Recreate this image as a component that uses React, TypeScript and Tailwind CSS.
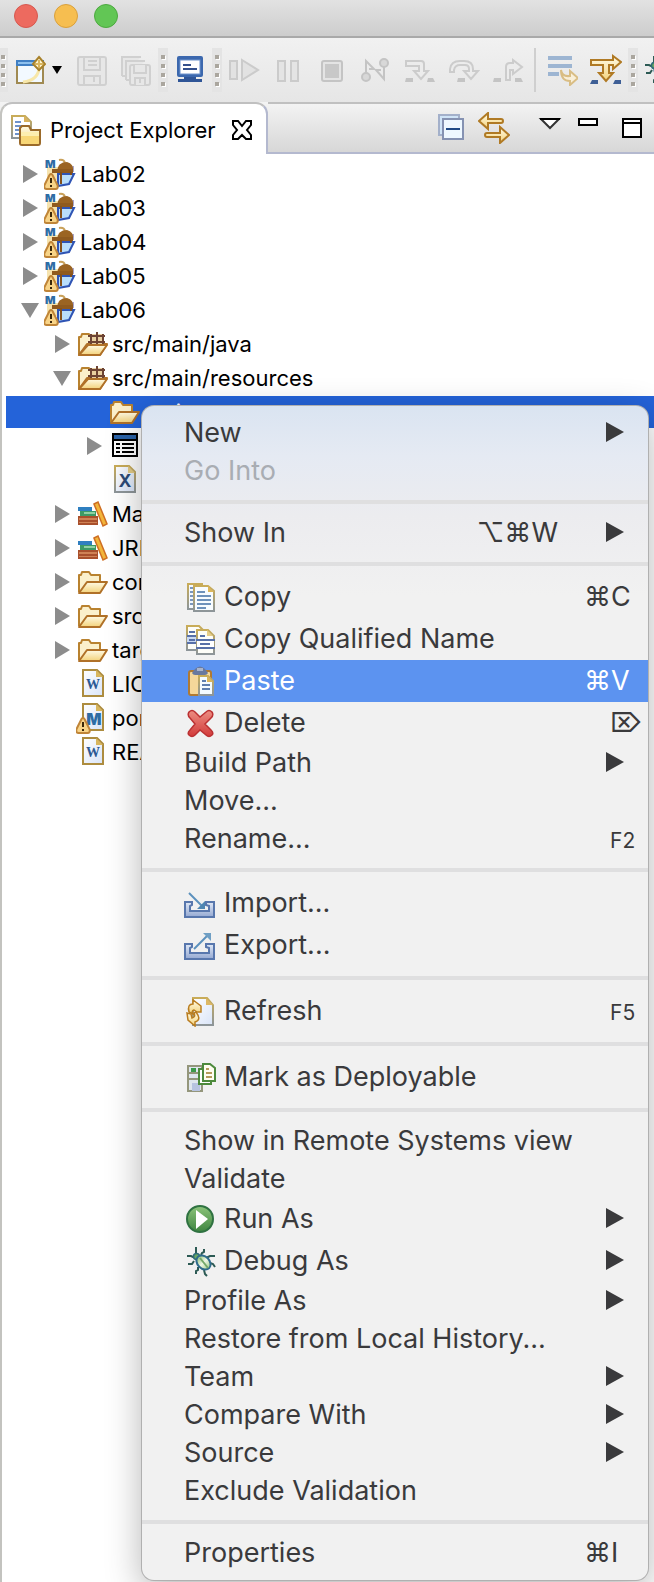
import type { ReactNode } from "react";

function Icon({ children, className = "size-8" }: { children: ReactNode; className?: string }) {
  return (
    <svg viewBox="0 0 32 32" fill="none" aria-hidden="true" className={`block shrink-0 ${className}`}>
      {children}
    </svg>
  );
}

/* ---------- gradients shared by the icons ---------- */

function Gradients() {
  return (
    <svg width="0" height="0" aria-hidden="true" className="absolute">
      <defs>
        <linearGradient id="gold" x1="0" y1="0" x2="0" y2="1">
          <stop offset="0" stopColor="#fffbe6" />
          <stop offset="1" stopColor="#f3d27a" />
        </linearGradient>
        <linearGradient id="paper" x1="0" y1="0" x2="1" y2="1">
          <stop offset="0" stopColor="#ffffff" />
          <stop offset="1" stopColor="#d9e4f8" />
        </linearGradient>
        <linearGradient id="tray" x1="0" y1="0" x2="0" y2="1">
          <stop offset="0" stopColor="#dfe8f6" />
          <stop offset="1" stopColor="#95a9d2" />
        </linearGradient>
        <linearGradient id="green" x1="0" y1="0" x2="0" y2="1">
          <stop offset="0" stopColor="#8cc47a" />
          <stop offset="1" stopColor="#3f8540" />
        </linearGradient>
        <linearGradient id="red" x1="0" y1="0" x2="0" y2="1">
          <stop offset="0" stopColor="#ec8d82" />
          <stop offset="1" stopColor="#d23a3a" />
        </linearGradient>
        <linearGradient id="leaf" x1="0" y1="0" x2="1" y2="0">
          <stop offset="0" stopColor="#8fc27a" />
          <stop offset="0.5" stopColor="#eef7e4" />
          <stop offset="1" stopColor="#a5cf92" />
        </linearGradient>
        <linearGradient id="border" x1="0" y1="0" x2="0" y2="1">
          <stop offset="0" stopColor="#c9ac58" />
          <stop offset="1" stopColor="#8d9599" />
        </linearGradient>
      </defs>
    </svg>
  );
}

/* ---------- toolbar icons ---------- */

const NewIcon = () => (
  <Icon>
    <path d="M3 8h26v21H3z" fill="#f2f9ff" stroke="#a08a52" strokeWidth="2" />
    <path d="M2 6h28v6H2z" fill="#3f7fc4" />
    <path d="M4 8h22v2H4z" fill="#8cc0ee" />
    <path d="M9 28Q25 26 25 13" stroke="#f7e7a9" strokeWidth="3" />
    <path d="M25 3l6 7-6 6-6-6z" fill="#fff6d2" stroke="#a8812a" strokeWidth="2" />
    <path d="M25 6v8M21 10h8" stroke="#d9b660" strokeWidth="2" />
  </Icon>
);
const SaveIcon = () => (
  <Icon>
    <g stroke="#d0d0d0" strokeWidth="2">
      <rect x="2" y="3" width="28" height="28" rx="2" fill="#e7e7e7" />
      <path d="M8 3v13h16V3M12 7h9M12 11h9" />
      <path d="M8 31v-9h16v9M18 23v5" />
    </g>
  </Icon>
);
const SaveAllIcon = () => (
  <Icon>
    <g stroke="#d0d0d0" strokeWidth="2" fill="#e7e7e7">
      <path d="M2 22V3h19M2 22h4M6 26V7h19M6 26h4" />
      <rect x="10" y="11" width="20" height="20" rx="2" />
      <path d="M14 11v8h12v-8M15 31v-7h10v7M20 25v4" />
    </g>
  </Icon>
);
const MonitorIcon = () => (
  <Icon>
    <rect x="3" y="2" width="26" height="21" rx="2" fill="#3c68ae" />
    <rect x="6" y="6" width="20" height="14" fill="#fff" stroke="#6f93cc" />
    <path d="M9 11h8M9 15h14" stroke="#34508c" strokeWidth="2" />
    <path d="M10 23h12v2h6v3H4v-3h6z" fill="#2f5597" />
  </Icon>
);
const ResumeIcon = () => (
  <Icon>
    <g stroke="#cbcbcb" strokeWidth="2" fill="#e2e2e2">
      <path d="M2 7h7v18H2zM14 6l16 10-16 10z" />
    </g>
  </Icon>
);
const PauseIcon = () => (
  <Icon>
    <path d="M6 7h7v20H6zM19 7h7v20h-7z" stroke="#cbcbcb" strokeWidth="2" fill="#e4e4e4" />
  </Icon>
);
const StopIcon = () => (
  <Icon>
    <rect x="6" y="7" width="20" height="20" rx="2" fill="#e4e4e4" stroke="#c4c4c4" strokeWidth="2" />
    <path d="M9 10h14v14H9z" fill="#c8c8c8" />
  </Icon>
);
const DisconnectIcon = () => (
  <Icon>
    <g stroke="#c4c4c4" strokeWidth="2" fill="#d8d8d8">
      <path d="M6 20V7l8 8h-5M24 11v14l-8-9h5" fill="none" />
      <circle cx="6" cy="23" r="4" />
      <circle cx="24" cy="9" r="4" />
    </g>
  </Icon>
);
const StepIntoIcon = () => (
  <Icon>
    <path d="M2 7h15q3 0 3 3v7h4l-7 8-7-8h5v-5H2z" fill="#ececec" stroke="#cccccc" strokeWidth="2" />
    <path d="M2 24h7v4H1zM24 24h5l2 4h-8z" fill="#c4c4c4" />
  </Icon>
);
const StepOverIcon = () => (
  <Icon>
    <path d="M2 18v-3q1-8 10-8h4q9 0 9 8v2h5l-7 8-7-8h5v-2q0-4-4-4h-5q-5 0-6 5v2z" fill="#ececec" stroke="#cccccc" strokeWidth="2" />
    <path d="M10 24h7v4H9z" fill="#c4c4c4" />
  </Icon>
);
const StepReturnIcon = () => (
  <Icon>
    <path d="M14 26V13q0-4 4-4h3V6l9 7-9 7v-4h-3v10z" fill="#ececec" stroke="#cccccc" strokeWidth="2" />
    <path d="M2 24h7v4H1zM23 24h6l2 4h-8z" fill="#c4c4c4" />
  </Icon>
);
const DropToFrameIcon = () => (
  <Icon>
    <path d="M2 2h24v4H2zM2 10h24v4H2zM2 18h11v4H2z" fill="#9db5d2" />
    <path d="M15 16q1 7 9 6v-5l8 7-8 7v-4q-9 0-9-11z" fill="#f9efd8" stroke="#d9bd84" strokeWidth="2" />
  </Icon>
);
const StepFiltersIcon = () => (
  <Icon>
    <path d="M1 6h22V2l8 6-8 7v-4h-4v8h4l-7 8-7-8h4v-8H1z" fill="url(#gold)" stroke="#b07a24" strokeWidth="2" />
    <path d="M2 26h6v4H0zM25 26h6v4h-8z" fill="#3e5f96" />
  </Icon>
);
const BugIcon = () => (
  <Icon>
    <path
      d="M11 12H9L7 11H3M12 9V2M17 10l1-2 2-1V4M22 13l4-2h5M26 18l3 1 2 3M10 16l-2 3H4M14 22v3l-2 1v3M20 25l1 4 2 2"
      stroke="#2c5a54"
      strokeWidth="2"
    />
    <circle cx="12.500" cy="11.500" r="3" fill="#6aa862" stroke="#2f6b78" strokeWidth="1.500" />
    <ellipse cx="19.500" cy="17.500" rx="8" ry="6" transform="rotate(45 19.5 17.5)" fill="url(#leaf)" stroke="#2f6b8c" strokeWidth="2" />
    <path d="M16 13l8 10" stroke="#74a86a" strokeWidth="2" />
  </Icon>
);

/* ---------- view header icons ---------- */

const ExplorerIcon = () => (
  <Icon>
    <path d="M2 2h13l6 6v16H2z" fill="#fff" stroke="url(#border)" strokeWidth="2" />
    <path d="M14 2v6h6z" fill="#d9b25c" />
    <path d="M5 8h6M5 12h8M5 16h5M5 20h4" stroke="#6f93cc" strokeWidth="2" />
    <path d="M10 29V14l2-2h7l2 4h9v13q0 2-2 2H12q-2 0-2-2z" fill="url(#gold)" stroke="#9b6a2a" strokeWidth="2" />
    <path d="M11 18h18v11q0 1-1 1H12q-1 0-1-1z" fill="#f8d777" />
    <path d="M11 18h18v4H11z" fill="#fdeeb0" />
  </Icon>
);
const CloseIcon = () => (
  <svg viewBox="0 0 20 20" className="block size-5" fill="#fff" stroke="#000" strokeWidth="2" aria-hidden="true">
    <path d="M1 1h5l4 5 4-5h5v4l-4 5 4 5v4h-5l-4-4-4 4H1v-4l4-5-4-5z" />
  </svg>
);
const CollapseAllIcon = () => (
  <Icon>
    <path d="M3 3h20v20H3z" fill="#cfe4f7" stroke="#a3b0ca" strokeWidth="2" />
    <path d="M7 7h20v20H7z" fill="#eef8ff" stroke="#8592b2" strokeWidth="2" />
    <path d="M10 17h14" stroke="#1f4a86" strokeWidth="2" />
  </Icon>
);
const LinkIcon = () => (
  <Icon>
    <g fill="url(#gold)" stroke="#b07a24" strokeWidth="2">
      <path d="M1 9l9-8v6h13q2 0 2 2t-2 2H10v6z" />
      <path d="M31 23l-9-8v6H9q-2 0-2 2t2 2h13v6z" />
    </g>
  </Icon>
);
const ViewMenuIcon = () => (
  <Icon>
    <path d="M7 7h18l-9 9z" fill="#fff" stroke="#333" strokeWidth="2" />
    <path d="M6 7h20" stroke="#000" strokeWidth="2" />
  </Icon>
);
const MinimizeIcon = () => (
  <Icon>
    <path d="M7 7h18v6H7z" fill="#fff" stroke="#000" strokeWidth="2" />
  </Icon>
);
const MaximizeIcon = () => (
  <Icon>
    <path d="M7 7h18v18H7zM7 11h18" fill="#fff" stroke="#000" strokeWidth="2" />
  </Icon>
);

/* ---------- tree icons ---------- */

const Warning = () => (
  <>
    <path d="M5.500 17q1.500-2 3 0l5 10q1 4-2 4h-9q-3 0-2-4z" fill="#f8d488" stroke="#c08538" strokeWidth="2" />
    <path d="M7 20v5M7 27v2" stroke="#3b2708" strokeWidth="2" />
  </>
);
const ProjectIcon = () => (
  <Icon>
    <path d="M3 9h12v13H3z" fill="#f6e3ae" />
    <path d="M15 2q5-1 6 3M15 8l6-2" stroke="#c9a15a" strokeWidth="2" />
    <path d="M26 8h4v6h-4z" fill="#a9a6cc" />
    <path d="M13 13q1-9 10-9 7 2 6 9z" fill="#9b6422" />
    <path d="M8 11h21v4H8z" fill="#8f5a1e" />
    <path d="M14 16h16l-5 10-11 2z" fill="#b9defb" stroke="#2f54b4" strokeWidth="2" />
    <path d="M17 14v12M27 14v3" stroke="#85511b" strokeWidth="2" />
    <text x="1" y="10" fontSize="11" fontWeight="900" fill="#2e6ca4" className="font-['Inter',sans-serif]">M</text>
    <Warning />
  </Icon>
);
const OpenFolder = () => (
  <>
    <path d="M3 26V9h2l1-3h7l2 3h9v6" fill="#fbf0cb" stroke="#b9822f" strokeWidth="2" strokeLinejoin="round" />
    <path d="M3 27l8-11h20l-7 11z" fill="url(#gold)" stroke="#b07128" strokeWidth="2" strokeLinejoin="round" />
  </>
);
const FolderIcon = () => (
  <Icon>
    <OpenFolder />
  </Icon>
);
const SourceFolderIcon = () => (
  <Icon>
    <OpenFolder />
    <path d="M15 6h12v11H15z" fill="#e8cfa0" />
    <path d="M12 8h17M12 14h17M15 6v12M21 4v14M27 6v12" stroke="#6d4334" strokeWidth="2" />
    <path d="M3 27l9-10h19l-7 10z" fill="url(#gold)" stroke="#b07128" strokeWidth="2" strokeLinejoin="round" />
  </Icon>
);
const TableIcon = () => (
  <Icon>
    <path d="M5 4h24v22H5z" fill="#fff" stroke="#000" strokeWidth="2" />
    <path d="M6 5h22v4H6z" fill="#2a63a8" />
    <path d="M5 10h24" stroke="#000" strokeWidth="2" />
    <path d="M8 14h4M14 14h12M8 18h4M14 18h12M8 22h4M14 22h12" stroke="#000" strokeWidth="2" />
  </Icon>
);
function FileIcon({ letter, warning }: { letter: string; warning?: boolean }) {
  return (
    <Icon>
      <path d="M7 2h14l6 6v20H7z" fill="url(#paper)" stroke="#ad8c3f" strokeWidth="2" />
      <path d="M20 2v7h7z" fill="#d8b65e" />
      {warning ? (
        <text x="18" y="23" textAnchor="middle" fontSize="16" fontWeight="900" fill="#2e6ca4" className="font-['Inter',sans-serif]">
          {letter}
        </text>
      ) : (
        <text x="17" y="21" textAnchor="middle" fontSize="14" fontWeight="700" fill="#2c5993" className="font-['Liberation_Serif',serif]">
          {letter}
        </text>
      )}
      {warning && <Warning />}
    </Icon>
  );
}
const SchemaIcon = () => (
  <Icon>
    <path d="M7 2h14l6 6v20H7z" fill="url(#paper)" stroke="url(#border)" strokeWidth="2" />
    <path d="M20 2v7h7z" fill="#e3cb86" />
    <text x="17" y="23" textAnchor="middle" fontSize="20" fontWeight="700" fill="#2c4a77" className="font-['Liberation_Mono',monospace]">
      X
    </text>
  </Icon>
);
const LibraryIcon = () => (
  <Icon>
    <path d="M2 9h14v4H2z" fill="#2f7fc0" />
    <path d="M4 13h16v5H4z" fill="#3d9a66" />
    <path d="M8 15h11" stroke="#8fd0a2" strokeWidth="2" />
    <path d="M2 18h20v9H2z" fill="#a9502c" />
    <path d="M3 20h18v2H3zM3 24h18v1H3z" fill="#cf8255" />
    <path d="M18 6l4-2 9 22-4 2z" fill="#f2b53a" stroke="#cf6f23" strokeWidth="1.500" />
  </Icon>
);

/* ---------- context menu icons ---------- */

const CopyIcon = () => (
  <Icon>
    <path d="M4 3h14v25H4z" fill="#f4f9ff" stroke="url(#border)" strokeWidth="2" />
    <path d="M6 7h4M6 11h4M6 15h4M6 19h4M6 23h4" stroke="#7b97bd" strokeWidth="2" />
    <path d="M10 5h14l6 5v20H10z" fill="#f8fcff" stroke="url(#border)" strokeWidth="2" />
    <path d="M24 5v6h6z" fill="#dcb65c" />
    <path d="M13 11h8M13 15h14M13 19h14M13 23h14M13 27h9" stroke="#6f92bb" strokeWidth="2" />
  </Icon>
);
const CopyNameIcon = () => (
  <Icon>
    <path d="M3 3h12l5 5v19H3z" fill="#fdfdf8" stroke="url(#border)" strokeWidth="2" />
    <path d="M3 14h12v6H3z" fill="#c9d9f2" />
    <path d="M5 9h6M3 13h12M5 17h6M3 20h12" stroke="#5870a8" strokeWidth="2" />
    <path d="M13 7h11l6 6v18H13z" fill="#fdfdf8" stroke="url(#border)" strokeWidth="2" />
    <path d="M23 7v6h6z" fill="#e6cd87" />
    <path d="M13 17h17v7H13z" fill="#fff" />
    <path d="M16 13h5M12 17h19M16 21h10M12 25h19" stroke="#5870a8" strokeWidth="2" />
  </Icon>
);
const PasteIcon = () => (
  <Icon>
    <rect x="5" y="6" width="22" height="24" rx="2" fill="#f5d79a" stroke="#b07a32" strokeWidth="2" />
    <path d="M11 4q5-5 10 0l3 4q-1 2-3 2H11q-2 0-3-2z" fill="#69799f" />
    <path d="M13 3h6v3h-6z" fill="#a9b4cc" />
    <path d="M15 11h9l5 5v14H15z" fill="#f4fbff" stroke="url(#border)" strokeWidth="2" />
    <path d="M23 11v6h6z" fill="#dcb65c" />
    <path d="M18 16h4M18 20h8M18 24h8" stroke="#5f7fae" strokeWidth="2" />
  </Icon>
);
const DeleteIcon = () => (
  <Icon>
    <path
      d="M5 5q3-3 6 0l5 5 6-5q3-3 6 0 2 3-1 6l-6 6 6 6q3 3 1 5-3 3-6 0l-6-5-5 5q-3 3-6 0-2-2 1-5l5-6-5-6q-3-3-1-6z"
      fill="url(#red)"
      stroke="#bb3133"
      strokeWidth="1.500"
    />
  </Icon>
);
const Tray = () => (
  <>
    <path d="M1 15h7v3l-2 1v5h19v-5l-3-1v-3h8v15H1z" fill="url(#tray)" stroke="#5877ad" strokeWidth="2" />
  </>
);
const ImportIcon = () => (
  <Icon>
    <Tray />
    <path d="M5 6l13 13" stroke="#5b91bd" strokeWidth="2" />
    <path d="M21 14v8h-8z" fill="#4f86b2" />
  </Icon>
);
const ExportIcon = () => (
  <Icon>
    <Tray />
    <path d="M10 20L23 7" stroke="#5b91bd" strokeWidth="2" />
    <path d="M19 4h8v8z" fill="#6f9fc4" />
  </Icon>
);
const RefreshIcon = () => (
  <Icon>
    <path d="M9 3h14l6 7v20H9z" fill="url(#paper)" stroke="url(#border)" strokeWidth="2" />
    <path d="M22 3v7h7z" fill="#ddb866" />
    <g fill="url(#gold)" stroke="#b97d20" strokeWidth="1.500">
      <path d="M5 17q-2-8 4-8V5l8 6v6h-4l-3-2q-3 1-1 4z" />
      <path d="M12 17q6 8-1 10v4l-7-6-1-7 4 1 1 4q4-1 2-5z" />
    </g>
  </Icon>
);
const DeployIcon = () => (
  <Icon>
    <path d="M4 5h14v25H4z" fill="#dfe6ee" stroke="#94967c" strokeWidth="2" />
    <path d="M5 12h12M5 18h12" stroke="#94967c" strokeWidth="2" />
    <path d="M7 7h5v4H7z" fill="#3c9a4a" />
    <path d="M8 22h8v8H8z" fill="#b7c3e0" />
    <path d="M15 8h12v15H15z" fill="#fff" stroke="#4d8a3c" strokeWidth="2" />
    <path d="M19 3h7l5 4v13H19z" fill="#fffdf0" stroke="#4d8a3c" strokeWidth="2" />
    <path d="M22 8h3M22 12h6M22 16h6" stroke="#b59b5a" strokeWidth="2" />
  </Icon>
);
const RunIcon = () => (
  <Icon>
    <circle cx="16" cy="16" r="13" fill="url(#green)" stroke="#2f7241" strokeWidth="2" />
    <path d="M12 7l12 9-12 10z" fill="#fff" />
  </Icon>
);

/* ---------- toolbar ---------- */

function Grip({ className = "" }: { className?: string }) {
  return (
    <div className={`flex h-11 w-[10px] shrink-0 flex-col items-center justify-center gap-[5px] bg-[#e4e4e4] ${className}`}>
      <i className="size-1 bg-[#aaa69e] shadow-[1px_1px_0_#fff]" />
      <i className="size-1 bg-[#aaa69e] shadow-[1px_1px_0_#fff]" />
      <i className="size-1 bg-[#aaa69e] shadow-[1px_1px_0_#fff]" />
      <i className="size-1 bg-[#aaa69e] shadow-[1px_1px_0_#fff]" />
    </div>
  );
}

function ToolButton({ label, disabled, children }: { label: string; disabled?: boolean; children: ReactNode }) {
  return (
    <button type="button" aria-label={label} disabled={disabled} className="shrink-0">
      {children}
    </button>
  );
}

function Toolbar() {
  return (
    <div role="toolbar" aria-label="Main" className="flex h-16 items-center overflow-hidden bg-linear-to-b from-[#f1f1f1] to-[#e6e6e6]">
      <Grip className="-ml-0.5" />
      <div className="flex items-center px-1.5">
        <ToolButton label="New"><NewIcon /></ToolButton>
        <button type="button" aria-label="New options" className="mx-1.5 h-8">
          <svg viewBox="0 0 10 8" className="block h-2 w-[10px]" aria-hidden="true">
            <path d="M0 0h10L5 8z" fill="#000" />
          </svg>
        </button>
        <div className="ml-2 flex gap-3">
          <ToolButton label="Save" disabled><SaveIcon /></ToolButton>
          <ToolButton label="Save All" disabled><SaveAllIcon /></ToolButton>
        </div>
      </div>
      <Grip />
      <div className="flex px-1.5">
        <ToolButton label="Open console"><MonitorIcon /></ToolButton>
      </div>
      <Grip />
      <div className="flex gap-3 px-1.5">
        <ToolButton label="Resume" disabled><ResumeIcon /></ToolButton>
        <ToolButton label="Suspend" disabled><PauseIcon /></ToolButton>
        <ToolButton label="Terminate" disabled><StopIcon /></ToolButton>
        <ToolButton label="Disconnect" disabled><DisconnectIcon /></ToolButton>
        <ToolButton label="Step Into" disabled><StepIntoIcon /></ToolButton>
        <ToolButton label="Step Over" disabled><StepOverIcon /></ToolButton>
        <ToolButton label="Step Return" disabled><StepReturnIcon /></ToolButton>
      </div>
      <div className="mx-1 h-11 w-0.5 shrink-0 bg-[#cfcfcf]" />
      <div className="flex gap-3 px-1.5">
        <ToolButton label="Drop to Frame"><DropToFrameIcon /></ToolButton>
        <ToolButton label="Use Step Filters"><StepFiltersIcon /></ToolButton>
      </div>
      <Grip />
      <div className="flex pl-1">
        <ToolButton label="Debug"><BugIcon /></ToolButton>
      </div>
    </div>
  );
}

/* ---------- project explorer ---------- */

function ViewHeader() {
  return (
    <div className="flex h-[52px] bg-linear-to-b from-[#f4f4f4] to-[#d6d6d6]">
      <div className="flex items-center rounded-t-xl border-2 border-b-0 border-t-[#c0c0c0] border-r-[#b4b9cf] border-l-[#c4c4c0] bg-white pt-0.5 pr-3.5 pl-2">
        <ExplorerIcon />
        <h1 className="pl-2 text-[22px] leading-7">Project Explorer</h1>
        <button type="button" aria-label="Close Project Explorer" className="ml-4">
          <CloseIcon />
        </button>
      </div>
      <div className="flex flex-1 items-center justify-end border-t-2 border-b-2 border-t-[#c0c0c0] border-b-[#b4b9cf] pr-1.5">
        <div className="flex gap-2.5">
          <ToolButton label="Collapse All"><CollapseAllIcon /></ToolButton>
          <ToolButton label="Link with Editor"><LinkIcon /></ToolButton>
        </div>
        <div className="ml-6 flex gap-1.5">
          <ToolButton label="View Menu"><ViewMenuIcon /></ToolButton>
          <ToolButton label="Minimize"><MinimizeIcon /></ToolButton>
        </div>
        <div className="ml-3 flex">
          <ToolButton label="Maximize"><MaximizeIcon /></ToolButton>
        </div>
      </div>
    </div>
  );
}

type Node = { level: 0 | 1 | 2; state?: "open" | "closed"; icon: ReactNode; label?: string; selected?: boolean };

const nodes: Node[] = [
  { level: 0, state: "closed", icon: <ProjectIcon />, label: "Lab02" },
  { level: 0, state: "closed", icon: <ProjectIcon />, label: "Lab03" },
  { level: 0, state: "closed", icon: <ProjectIcon />, label: "Lab04" },
  { level: 0, state: "closed", icon: <ProjectIcon />, label: "Lab05" },
  { level: 0, state: "open", icon: <ProjectIcon />, label: "Lab06" },
  { level: 1, state: "closed", icon: <SourceFolderIcon />, label: "src/main/java" },
  { level: 1, state: "open", icon: <SourceFolderIcon />, label: "src/main/resources" },
  { level: 2, icon: <FolderIcon />, label: "main", selected: true },
  { level: 2, state: "closed", icon: <TableIcon /> },
  { level: 2, icon: <SchemaIcon /> },
  { level: 1, state: "closed", icon: <LibraryIcon />, label: "Maven" },
  { level: 1, state: "closed", icon: <LibraryIcon />, label: "JRE" },
  { level: 1, state: "closed", icon: <FolderIcon />, label: "com" },
  { level: 1, state: "closed", icon: <FolderIcon />, label: "src" },
  { level: 1, state: "closed", icon: <FolderIcon />, label: "target" },
  { level: 1, icon: <FileIcon letter="W" />, label: "LICENSE" },
  { level: 1, icon: <FileIcon letter="M" warning />, label: "pom" },
  { level: 1, icon: <FileIcon letter="W" />, label: "README" },
];

const indents = ["pl-3.5", "pl-[46px]", "pl-[78px]"];

function TreeRow({ node }: { node: Node }) {
  return (
    <li
      role="treeitem"
      aria-level={node.level + 1}
      aria-selected={!!node.selected}
      className={`mb-0.5 flex h-8 items-center ${indents[node.level]} ${node.selected ? "bg-[#2463d9] text-white" : ""}`}
    >
      <span className="flex w-6 shrink-0">
        {node.state && (
          <button type="button" aria-label={node.state === "open" ? "Collapse" : "Expand"}>
            <svg viewBox="0 0 20 20" className="block size-5" fill="#8c8c8c" aria-hidden="true">
              {node.state === "open" ? <path d="M1 3h18l-9 15z" /> : <path d="M3 1l15 9-15 9z" />}
            </svg>
          </button>
        )}
      </span>
      {node.icon}
      <span className="pl-1 text-[22px] leading-8">{node.label}</span>
    </li>
  );
}

/* ---------- context menu ---------- */

type Item = {
  label: string;
  icon?: ReactNode;
  keys?: string;
  small?: boolean;
  submenu?: boolean;
  disabled?: boolean;
  active?: boolean;
};

const groups: Item[][] = [
  [{ label: "New", submenu: true }, { label: "Go Into", disabled: true }],
  [{ label: "Show In", keys: "⌥⌘W", submenu: true }],
  [
    { label: "Copy", icon: <CopyIcon />, keys: "⌘C" },
    { label: "Copy Qualified Name", icon: <CopyNameIcon /> },
    { label: "Paste", icon: <PasteIcon />, keys: "⌘V", active: true },
    { label: "Delete", icon: <DeleteIcon />, keys: "⌦" },
    { label: "Build Path", submenu: true },
    { label: "Move..." },
    { label: "Rename...", keys: "F2", small: true },
  ],
  [
    { label: "Import...", icon: <ImportIcon /> },
    { label: "Export...", icon: <ExportIcon /> },
  ],
  [{ label: "Refresh", icon: <RefreshIcon />, keys: "F5", small: true }],
  [{ label: "Mark as Deployable", icon: <DeployIcon /> }],
  [
    { label: "Show in Remote Systems view" },
    { label: "Validate" },
    { label: "Run As", icon: <RunIcon />, submenu: true },
    { label: "Debug As", icon: <BugIcon />, submenu: true },
    { label: "Profile As", submenu: true },
    { label: "Restore from Local History..." },
    { label: "Team", submenu: true },
    { label: "Compare With", submenu: true },
    { label: "Source", submenu: true },
    { label: "Exclude Validation" },
  ],
  [{ label: "Properties", keys: "⌘I" }],
];

function keyClass(item: Item) {
  if (item.submenu) return "pr-12";
  if (item.small) return "w-16 pt-1 pl-[26px] text-[21px]";
  if (item.keys === "⌦") return "w-16 pl-[26px]";
  return "w-16";
}

function MenuItem({ item }: { item: Item }) {
  return (
    <button
      type="button"
      role="menuitem"
      disabled={item.disabled}
      aria-haspopup={item.submenu ? "menu" : undefined}
      className={`flex w-full items-center pl-[42px] text-left ${item.icon ? "h-[42px]" : "h-[38px]"} ${
        item.active ? "bg-[#5c93f0] text-white" : item.disabled ? "text-[#a9adb3]" : "text-[#3a3a3c]"
      }`}
    >
      {item.icon}
      <span className={`flex-1 whitespace-nowrap ${item.icon ? "pl-2" : ""}`}>{item.label}</span>
      {item.keys && <kbd className={`shrink-0 whitespace-nowrap font-['Inter','DejaVu_Sans',sans-serif] ${keyClass(item)}`}>{item.keys}</kbd>}
      {item.submenu && (
        <svg viewBox="0 0 18 20" className="mr-6 mb-0.5 block h-5 w-[18px] shrink-0" fill="currentColor" aria-hidden="true">
          <path d="M0 0l18 10L0 20z" />
        </svg>
      )}
    </button>
  );
}

function ContextMenu() {
  return (
    <div
      role="menu"
      aria-label="Project actions"
      className="absolute top-[406px] right-[6px] left-[142px] overflow-hidden rounded-xl bg-[#f1f1f1] bg-[linear-gradient(to_bottom,#dae4f1_0px,#e5eaf3_50px,#ececef_110px,#f1f1f1_190px)] py-2 text-[27px] leading-9 shadow-[0_0_0_1px_#b0b0b0,0_10px_36px_rgba(0,0,0,0.3)]"
    >
      {groups.map((group, i) => (
        <div key={i} role="group">
          {i > 0 && <div role="separator" className="my-2.5 h-1 bg-[#dfdfe0]" />}
          {group.map((item) => (
            <MenuItem key={item.label} item={item} />
          ))}
        </div>
      ))}
    </div>
  );
}

export default function App() {
  return (
    <div className="relative min-h-[1582px] overflow-hidden bg-white font-['Inter',sans-serif] text-black">
      <Gradients />
      <header className="flex h-[38px] gap-4 border-b-2 border-[#a9a9a9] bg-linear-to-b from-[#e2e2e2] to-[#cdcdcd] pt-1 pl-3.5">
        <button type="button" aria-label="Close window" className="size-6 rounded-full border border-[#d6584f] bg-[#ed6a5f]" />
        <button type="button" aria-label="Minimize window" className="size-6 rounded-full border border-[#d9a03c] bg-[#f6be50]" />
        <button type="button" aria-label="Zoom window" className="size-6 rounded-full border border-[#4ca93f] bg-[#62c655]" />
      </header>
      <Toolbar />
      <ViewHeader />
      <main className="min-h-[1428px] border-l-2 border-[#c3c3bf] pt-1">
        <ul role="tree" aria-label="Project Explorer" className="pl-1">
          {nodes.map((node, i) => (
            <TreeRow key={i} node={node} />
          ))}
        </ul>
      </main>
      <ContextMenu />
    </div>
  );
}
